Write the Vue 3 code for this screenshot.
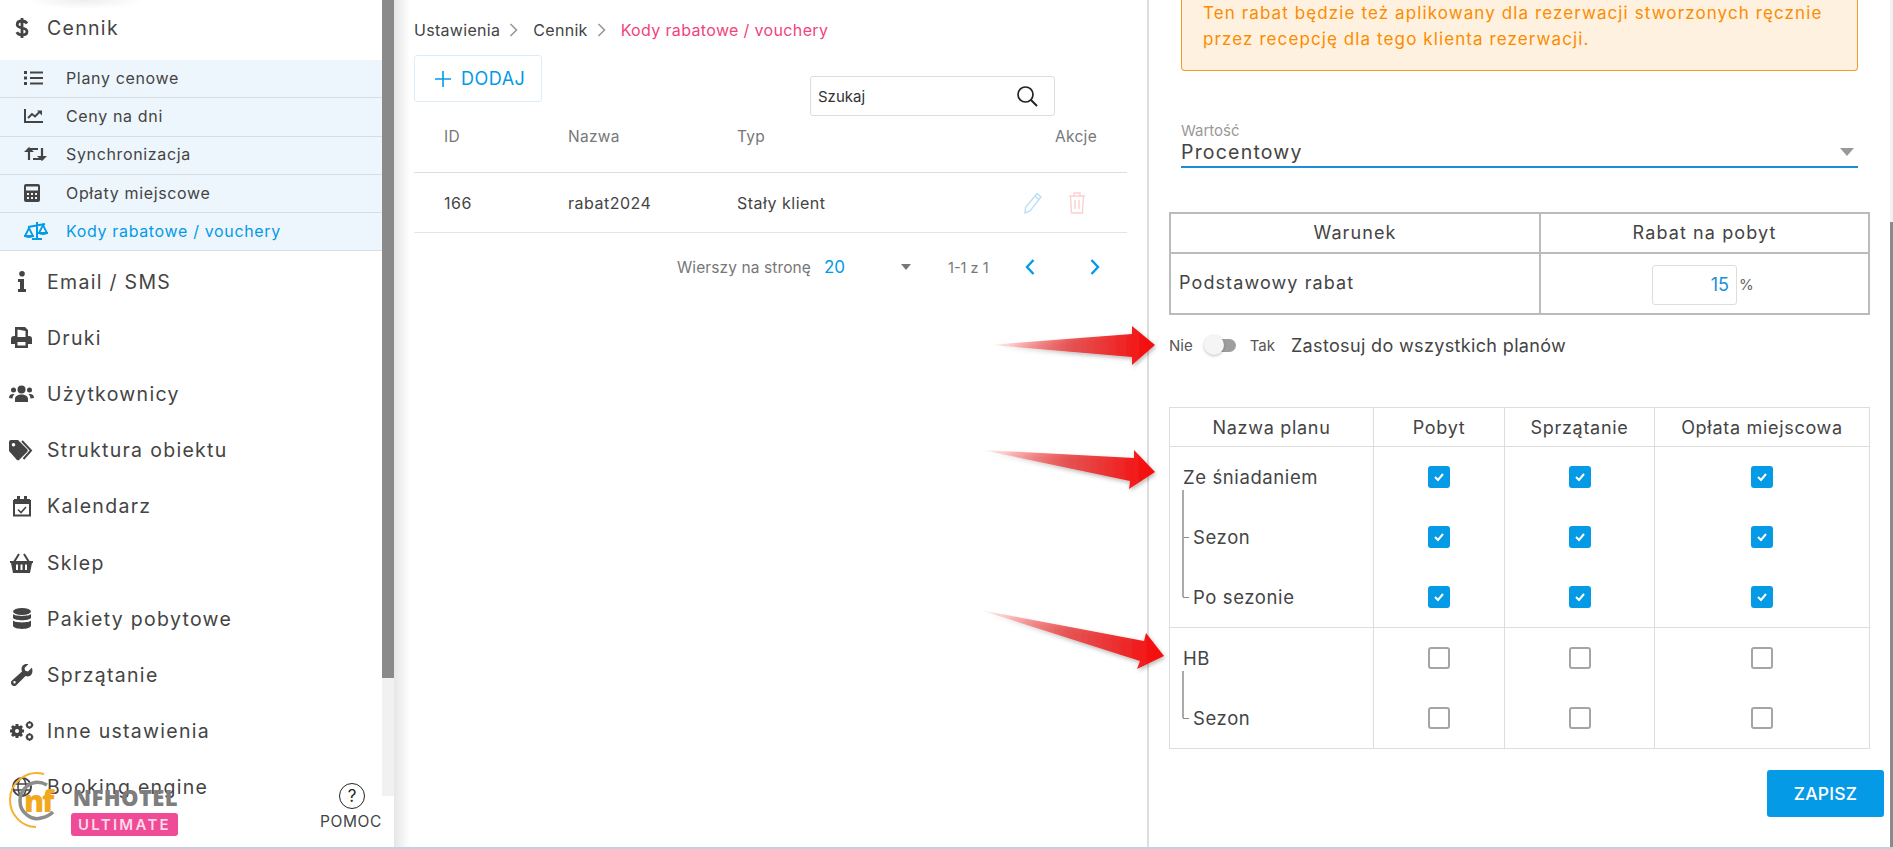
<template>
  <div class="page">
    <aside class="sidebar">
      <nav class="menu">
        <a class="item">
          <span class="ico"><svg width="14" height="22" viewBox="0 0 14 22"><path d="M7 1v20M12 6.500C11 4.800 9.300 4 7 4 4.200 4 2.200 5.400 2.200 7.500c0 5 9.800 2 9.800 7 0 2.200-2.100 3.500-5 3.500-2.500 0-4.300-1-5.200-2.800" fill="none" stroke="#444" stroke-width="2.800"/></svg></span>
          Cennik
        </a>
        <div class="submenu">
          <a v-for="s in subItems" :key="s.label" class="subitem" :class="{ active: s.active }">
            <span class="subico" v-html="s.icon"></span>
            {{ s.label }}
          </a>
        </div>
        <a v-for="m in menuItems" :key="m.label" class="item">
          <span class="ico" v-html="m.icon"></span>
          {{ m.label }}
        </a>
      </nav>
      <div class="scrollbar"><div class="thumb"></div></div>
      <div class="logo">
        <svg class="logo-mark" width="60" height="60" viewBox="0 0 60 60">
          <path d="M36 3C18 -2 2 12 2 29 2 44 14 56 28 56" fill="none" stroke="#f4b02e" stroke-width="2"/>
          <path d="M39 14C24 6 12 18 12 30c0 12 12 20 21 17 5-1 9-3 12-6" fill="none" stroke="#8c8c8c" stroke-width="3.500"/>
          <text x="16" y="41" class="logo-nf">nf</text>
        </svg>
        <div class="logo-text">
          <span class="logo-name">NFHOTEL</span>
          <span class="logo-badge">ULTIMATE</span>
        </div>
      </div>
      <div class="help">
        <span class="help-circle">?</span>
        <span class="help-label">POMOC</span>
      </div>
    </aside>

    <main class="main">
      <div class="crumbs">
        <span>Ustawienia</span>
        <svg class="crumb-sep" width="9" height="14" viewBox="0 0 9 14"><path d="M1.500 1l6 6-6 6" fill="none" stroke="#999" stroke-width="1.600"/></svg>
        <span>Cennik</span>
        <svg class="crumb-sep" width="9" height="14" viewBox="0 0 9 14"><path d="M1.500 1l6 6-6 6" fill="none" stroke="#999" stroke-width="1.600"/></svg>
        <span class="crumb-on">Kody rabatowe / vouchery</span>
      </div>

      <button class="add">
        <svg width="18" height="18" viewBox="0 0 18 18"><path d="M9 1v16M1 9h16" stroke="#049ae6" stroke-width="1.600"/></svg>
        DODAJ
      </button>

      <div class="search">
        <span>Szukaj</span>
        <svg width="24" height="24" viewBox="0 0 24 24"><circle cx="10.500" cy="10.500" r="7.500" fill="none" stroke="#222" stroke-width="1.700"/><path d="M16 16l6 6" stroke="#222" stroke-width="1.900"/></svg>
      </div>

      <div class="grid-row grid-head">
        <span>ID</span><span>Nazwa</span><span>Typ</span><span class="right">Akcje</span>
      </div>
      <div class="grid-row grid-body">
        <span>166</span><span>rabat2024</span><span>Stały klient</span>
        <span class="actions">
          <svg width="20" height="24" viewBox="0 0 20 24"><path d="M14 2.500l4 3.500L7 20l-5 2 .5-5.500z M12 5l4 3.500" fill="none" stroke="#bcdff5" stroke-width="1.400"/></svg>
          <svg width="20" height="24" viewBox="0 0 20 24"><path d="M2 5h16M7 5V2h6v3M3.500 5l1 17h11l1-17M8 9v9M12 9v9" fill="none" stroke="#fbd0d0" stroke-width="1.400"/></svg>
        </span>
      </div>

      <div class="pager">
        <span class="pager-label">Wierszy na stronę</span>
        <span class="pager-size">20</span>
        <span class="pager-caret"></span>
        <span class="pager-range">1-1 z 1</span>
        <svg class="pager-prev" width="12" height="18" viewBox="0 0 12 18"><path d="M9.500 2L3 9l6.500 7" fill="none" stroke="#049ae6" stroke-width="2.400"/></svg>
        <svg class="pager-next" width="12" height="18" viewBox="0 0 12 18"><path d="M2.500 2L9 9l-6.500 7" fill="none" stroke="#049ae6" stroke-width="2.400"/></svg>
      </div>
    </main>

    <section class="panel">
      <div class="notice-wrap">
        <div class="notice">
          Ten rabat będzie też aplikowany dla rezerwacji stworzonych ręcznie<br />
          przez recepcję dla tego klienta rezerwacji.
        </div>
      </div>

      <div class="select">
        <label>Wartość</label>
        <div class="select-value">Procentowy<span class="select-caret"></span></div>
      </div>

      <table class="discount">
        <tbody>
          <tr class="discount-head">
            <td class="c-name center">Warunek</td>
            <td class="center">Rabat na pobyt</td>
          </tr>
          <tr class="discount-row">
            <td>Podstawowy rabat</td>
            <td class="center">
              <span class="percent"><span class="percent-box">15</span><span class="percent-sign">%</span></span>
            </td>
          </tr>
        </tbody>
      </table>

      <div class="toggle-row">
        <span class="small">Nie</span>
        <span class="toggle"><span class="knob"></span></span>
        <span class="small">Tak</span>
        <span class="toggle-text">Zastosuj do wszystkich planów</span>
      </div>

      <div class="plans">
        <div class="plan-head">
          <div>Nazwa planu</div><div>Pobyt</div><div>Sprzątanie</div><div>Opłata miejscowa</div>
        </div>
        <div v-for="g in plans" :key="g.name" class="plan-group">
          <div class="plan-names">
            <div class="plan-name">{{ g.name }}</div>
            <div v-for="(c, i) in g.children" :key="c" class="plan-child">
              <span class="branch" :class="{ last: i === g.children.length - 1 }"></span>{{ c }}
            </div>
            <span class="trunk" :style="{ height: (g.children.length * 60 - 13) + 'px' }"></span>
          </div>
          <div v-for="n in 3" :key="n" class="plan-col">
            <span v-for="k in g.children.length + 1" :key="k" class="check" :class="{ on: g.on }">
              <svg v-if="g.on" width="12" height="10" viewBox="0 0 12 10"><path d="M2 5l3 3 5-6" fill="none" stroke="#fff" stroke-width="2"/></svg>
            </span>
          </div>
        </div>
      </div>

      <div class="save-row"><button class="save">ZAPISZ</button></div>
      <div class="panel-scroll"><div class="panel-thumb"></div></div>
    </section>

    <svg class="arrows" width="1893" height="849" viewBox="0 0 1893 849">
      <defs>
        <linearGradient id="red1" x1="0" x2="1" y1="0" y2="0">
          <stop offset="0" stop-color="#f11" stop-opacity="0" />
          <stop offset="0.5" stop-color="#e63c3c" stop-opacity="0.85" />
          <stop offset="1" stop-color="#f60808" />
        </linearGradient>
        <filter id="arrowShadow" x="-10%" y="-30%" width="120%" height="170%">
          <feDropShadow dx="1" dy="2" stdDeviation="2" flood-color="#000" flood-opacity="0.3" />
        </filter>
      </defs>
      <g fill="url(#red1)" filter="url(#arrowShadow)">
        <path d="M990 345L1132 334V326L1155 345L1132 365V357Z" />
        <path d="M982 450L1134 458V450L1155 472L1129 489L1130 481Z" />
        <path d="M980 610L1144 641L1146 633L1164 656L1137 669L1140 661Z" />
      </g>
    </svg>
    <div class="bottom-line"></div>
  </div>
</template>

<script setup>
const subItems = [
  {
    label: 'Plany cenowe',
    icon: '<svg width="19" height="16" viewBox="0 0 19 16"><path d="M0 1h3v3H0zM0 6.500h3v3H0zM0 12h3v3H0zM6 1.500h13v2H6zM6 7h13v2H6zM6 12.500h13v2H6z" fill="#444"/></svg>'
  },
  {
    label: 'Ceny na dni',
    icon: '<svg width="19" height="16" viewBox="0 0 19 16"><path d="M1 1v13h18" fill="none" stroke="#444" stroke-width="2"/><path d="M4 10l4-4 3 2.500 5-5" fill="none" stroke="#444" stroke-width="2"/><path d="M13 2.500h5v5z" fill="#444"/></svg>'
  },
  {
    label: 'Synchronizacja',
    icon: '<svg width="23" height="16" viewBox="0 0 23 16"><path d="M5 14V3h9M18 2v11H9" fill="none" stroke="#444" stroke-width="2.200"/><path d="M0 6l5-5 5 5zM13 10l5 5 5-5z" fill="#444"/></svg>'
  },
  {
    label: 'Opłaty miejscowe',
    icon: '<svg width="16" height="18" viewBox="0 0 16 18"><path fill-rule="evenodd" d="M2 0h12a2 2 0 012 2v14a2 2 0 01-2 2H2a2 2 0 01-2-2V2a2 2 0 012-2zM2 2.500v4h12v-4zM3 9v2h2V9zM7 9v2h2V9zM11 9v2h2V9zM3 13v2h2v-2zM7 13v2h2v-2zM11 13v2h2v-2z" fill="#444"/></svg>'
  },
  {
    label: 'Kody rabatowe / vouchery',
    active: true,
    icon: '<svg width="24" height="18" viewBox="0 0 24 18"><path d="M13 0v16M4 5l17-3" fill="none" stroke="#049ae6" stroke-width="2"/><path d="M1 14l4-8 4 8zM15 11l4-8 4 8z" fill="none" stroke="#049ae6" stroke-width="1.800"/><path d="M0 13h10c0 4-10 4-10 0zM14 10h10c0 4-10 4-10 0zM8 16h10v2H8z" fill="#049ae6"/></svg>'
  }
];

const menuItems = [
  {
    label: 'Email / SMS',
    icon: '<svg width="10" height="21" viewBox="0 0 10 21"><circle cx="5" cy="2.800" r="2.800" fill="#444"/><path d="M1 8h6v10h2v3H1v-3h2v-7H1z" fill="#444"/></svg>'
  },
  {
    label: 'Druki',
    icon: '<svg width="21" height="21" viewBox="0 0 21 21"><path fill-rule="evenodd" d="M4 0h10l3 3v6h1a3 3 0 013 3v5h-4v4H4v-4H0v-5a3 3 0 013-3h1zM6.500 2.500V10h8V4zM6.500 15v3.500h8V15z" fill="#444"/></svg>'
  },
  {
    label: 'Użytkownicy',
    icon: '<svg width="25" height="18" viewBox="0 0 25 18"><circle cx="12.500" cy="4.500" r="4" fill="#444"/><circle cx="4.500" cy="5" r="2.500" fill="#444"/><circle cx="20.500" cy="5" r="2.500" fill="#444"/><path d="M6 17v-3c0-3 3-4.500 6.500-4.500S19 11 19 14v3zM0 13c0-3 2-4.500 5.500-4-1.500 1.500-2 3-2 4.500zM25 13c0-3-2-4.500-5.500-4 1.500 1.500 2 3 2 4.500z" fill="#444"/></svg>'
  },
  {
    label: 'Struktura obiektu',
    icon: '<svg width="25" height="21" viewBox="0 0 25 21"><path fill-rule="evenodd" d="M2 0h7l9 9a2 2 0 010 3l-7.500 7.500a2 2 0 01-3 0L0 11V2a2 2 0 012-2zM4.500 3a1.800 1.800 0 100 3.600 1.800 1.800 0 000-3.600z" fill="#444"/><path d="M13 1l9 9.500L14.500 19" fill="none" stroke="#444" stroke-width="2"/></svg>'
  },
  {
    label: 'Kalendarz',
    icon: '<svg width="18" height="21" viewBox="0 0 18 21"><path d="M1 5h16v14.500H1z" fill="none" stroke="#444" stroke-width="2"/><path d="M1 3h16v5H1zM4 0h3v4H4zM11 0h3v4h-3z" fill="#444"/><path d="M5 13.500l3 3 5-5.500" fill="none" stroke="#444" stroke-width="1.600"/></svg>'
  },
  {
    label: 'Sklep',
    icon: '<svg width="23" height="20" viewBox="0 0 23 20"><path fill-rule="evenodd" d="M0 8h23v2h-1l-2 10H3L1 10H0zM6 11.500V17h2v-5.500zM10.500 11.500V17h2v-5.500zM15 11.500V17h2v-5.500z" fill="#444"/><path d="M4 9l5-8M19 9l-5-8" stroke="#444" stroke-width="2"/></svg>'
  },
  {
    label: 'Pakiety pobytowe',
    icon: '<svg width="18" height="21" viewBox="0 0 18 21"><ellipse cx="9" cy="3.500" rx="9" ry="3.500" fill="#444"/><path d="M0 6c2 2.500 16 2.500 18 0v4c-2 3-16 3-18 0zM0 12.500c2 2.500 16 2.500 18 0v5c0 4.500-18 4.500-18 0z" fill="#444"/></svg>'
  },
  {
    label: 'Sprzątanie',
    icon: '<svg width="22" height="22" viewBox="0 0 22 22"><path fill-rule="evenodd" d="M21 3.500l-4 4-2.800-.7-.7-2.800 4-4c-3.500-1-7 1.500-7 5 0 1 .2 1.700.5 2.400L1 16.500a3 3 0 004.500 4.500l9-9c.8.300 1.500.5 2.400.5 3.500 0 5.500-4 4.100-8.500zM3.500 19.500a1.200 1.200 0 110-2.400 1.200 1.200 0 010 2.400z" fill="#444"/></svg>'
  },
  {
    label: 'Inne ustawienia',
    icon: '<svg width="25" height="20" viewBox="0 0 25 20"><path d="M8 3v14M1 10h14M3 5l10 10M13 5L3 15" stroke="#444" stroke-width="3"/><circle cx="8" cy="10" r="4" fill="none" stroke="#444" stroke-width="3.200"/><circle cx="8" cy="10" r="2" fill="#fff"/><circle cx="20.500" cy="4" r="2.500" fill="none" stroke="#444" stroke-width="2.200"/><circle cx="20.500" cy="16" r="2.500" fill="none" stroke="#444" stroke-width="2.200"/><path d="M20.500 0v8M16.500 4h8M20.500 12v8M16.500 16h8" stroke="#444" stroke-width="1.200"/><circle cx="20.500" cy="4" r="1.400" fill="#fff"/><circle cx="20.500" cy="16" r="1.400" fill="#fff"/></svg>'
  },
  {
    label: 'Booking engine',
    icon: '<svg width="20" height="20" viewBox="0 0 20 20"><circle cx="10" cy="10" r="9" fill="none" stroke="#444" stroke-width="2"/><ellipse cx="10" cy="10" rx="4" ry="9" fill="none" stroke="#444" stroke-width="1.500"/><path d="M1 7h18M1 13h18" stroke="#444" stroke-width="1.500"/></svg>'
  }
];

const plans = [
  { name: 'Ze śniadaniem', children: ['Sezon', 'Po sezonie'], on: true },
  { name: 'HB', children: ['Sezon'], on: false }
];
</script>

<style>
html, body { margin: 0; background: #fff; }
</style>

<style scoped>
.page {
  position: relative;
  display: flex;
  width: 1893px;
  height: 849px;
  overflow: hidden;
  background: #fff;
  color: #444;
  font-family: "Inter", "Liberation Sans", sans-serif;
}

/* sidebar */
.sidebar {
  position: relative;
  flex: 0 0 394px;
  height: 849px;
  display: flex;
  overflow: hidden;
}
.menu {
  flex: 0 0 382px;
  display: flex;
  flex-direction: column;
  background: radial-gradient(ellipse 60px 9px at 85px 0, #eee, transparent);
}
.scrollbar { flex: 0 0 12px; height: 796px; background: #f1f1f1; }
.thumb { height: 678px; background: #8a8a8a; }
.item {
  height: 56.2px;
  flex: none;
  display: flex;
  align-items: center;
  padding-left: 47px;
  font-size: 19.500px;
  letter-spacing: 1.3px;
  position: relative;
  color: #444;
}
.item:first-child { height: 60px; padding-bottom: 4px; box-sizing: border-box; }
.ico {
  position: absolute;
  left: 9px;
  width: 25px;
  display: flex;
  justify-content: center;
}
.submenu { background: #eef6fd; flex: none; margin-bottom: 2px; }
.subitem {
  height: 38.3px;
  box-sizing: border-box;
  display: flex;
  align-items: center;
  padding-left: 66px;
  padding-bottom: 2px;
  font-size: 16px;
  letter-spacing: 0.65px;
  border-bottom: 1px solid #d8dde2;
  position: relative;
  color: #444;
}
.subitem.active { color: #049ae6; }
.subico { position: absolute; left: 24px; display: flex; }

.logo {
  position: absolute;
  left: 8px;
  top: 771px;
  display: flex;
}
.logo-mark { overflow: visible; }
.logo-nf { font: 800 30px "Open Sans", sans-serif; fill: #f2a81d; letter-spacing: -2px; }
.logo-text { display: flex; flex-direction: column; align-items: flex-end; margin-left: 3px; padding-top: 16px; }
.logo-name { font: 800 22px/20px "Open Sans", sans-serif; color: #7d7d7d; letter-spacing: 0.4px; }
.logo-badge {
  margin-top: 6px;
  width: 107px;
  height: 23px;
  line-height: 23px;
  background: #ef4b96;
  border-radius: 3px;
  color: #fbd9e8;
  font-size: 15px;
  font-weight: 600;
  letter-spacing: 2.3px;
  text-align: center;
}
.help {
  position: absolute;
  top: 796px;
  left: 310px;
  width: 84px;
  height: 53px;
  background: #fff;
}
.help-circle {
  position: absolute;
  top: -13px;
  left: 29px;
  width: 24px;
  height: 24px;
  border: 1.500px solid #222;
  border-radius: 50%;
  display: flex;
  align-items: center;
  justify-content: center;
  font-size: 17px;
  color: #222;
}
.help-label { position: absolute; top: 16px; left: 10px; font-size: 15.500px; letter-spacing: 0.6px; }

/* list */
.main {
  flex: 0 0 753px;
  box-sizing: border-box;
  padding: 0 20px;
  position: relative;
  background: linear-gradient(90deg, #e6e6e6, #fff 16px);
  font-size: 15px;
}
.crumbs {
  display: flex;
  align-items: center;
  height: 20px;
  margin-top: 20px;
  font-size: 16px;
  letter-spacing: 0.3px;
}
.crumb-sep { margin: 0 15px 0 9px; }
.crumb-on { color: #f1437d; letter-spacing: 0.35px; }
.add {
  display: flex;
  align-items: center;
  gap: 9px;
  margin-top: 15px;
  width: 128px;
  height: 47px;
  box-sizing: border-box;
  padding: 0 0 0 19px;
  background: #fff;
  border: 1px solid #dbeefa;
  border-radius: 3px;
  color: #049ae6;
  font: 400 18px "Inter", sans-serif;
  letter-spacing: 0.5px;
}
.search {
  position: absolute;
  left: 416px;
  top: 76px;
  width: 245px;
  height: 40px;
  box-sizing: border-box;
  border: 1px solid #ddd;
  border-radius: 3px;
  display: flex;
  align-items: center;
  justify-content: space-between;
  padding: 0 15px 0 7px;
  font-size: 15px;
  color: #333;
}
.grid-row {
  display: grid;
  grid-template-columns: 124px 169px 1fr 110px;
  padding-left: 30px;
  width: 713px;
  box-sizing: border-box;
  align-items: center;
}
.grid-head {
  height: 71px;
  align-items: start;
  padding-top: 25px;
  border-bottom: 1px solid #ddd;
  color: #777;
  padding-right: 30px;
  font-size: 15.500px;
  letter-spacing: 0.3px;
}
.grid-head .right { text-align: right; }
.grid-body {
  height: 60px;
  border-bottom: 1px solid #e4e4e4;
  padding-right: 30px;
  color: #444;
  font-size: 16px;
  letter-spacing: 0.5px;
}
.actions { display: flex; justify-content: flex-end; gap: 24px; padding-right: 10px; }
.pager {
  position: relative;
  height: 68px;
  width: 713px;
  display: flex;
  align-items: center;
  color: #777;
  font-size: 15.500px;
}
.pager-label { margin-left: 263px; width: 147px; white-space: nowrap; letter-spacing: 0.1px; }
.pager-size { color: #049ae6; font-size: 17px; width: 77px; }
.pager-caret { width: 0; height: 0; border: 5px solid transparent; border-top: 6px solid #777; border-bottom: 0; margin-right: 37px; }
.pager-range { width: 76px; font-size: 14.500px; }
.pager-prev { margin-right: 53px; }

/* panel */
.panel {
  position: relative;
  flex: 1;
  border-left: 2px solid #ddd;
  box-sizing: border-box;
  padding-left: 20px;
  font-size: 16px;
}
.notice-wrap { width: 689px; padding-left: 12px; box-sizing: border-box; overflow: hidden; }
.notice {
  box-sizing: border-box;
  width: 677px;
  height: 71px;
  padding-left: 21px;
  background: #fff1df;
  border: 1px solid #f39a2b;
  border-top: 0;
  border-radius: 0 0 4px 4px;
  color: #fb8c00;
  font-size: 17px;
  letter-spacing: 1.1px;
  line-height: 26px;
  white-space: nowrap;
}
.select { margin: 51px 0 0 12px; width: 677px; position: relative; }
.select label { display: block; font-size: 15px; color: #999; line-height: 17px; }
.select-value {
  height: 27px;
  line-height: 26px;
  border-bottom: 2px solid #1a8fd8;
  font-size: 19.500px;
  color: #444;
  position: relative;
  letter-spacing: 1.2px;
}
.select-caret {
  position: absolute;
  right: 4px;
  top: 9px;
  border: 7px solid transparent;
  border-top: 8px solid #999;
  border-bottom: 0;
}
.discount {
  margin-top: 44px;
  width: 701px;
  height: 103px;
  border-collapse: collapse;
  border: 2px solid #bbb;
  font-size: 18px;
  letter-spacing: 1.1px;
}
.discount td { border: 2px solid #bbb; padding: 0 0 2px 8px; }
.discount .center { text-align: center; padding: 0 0 2px; }
.c-name { width: 368px; }
.discount-head { height: 40px; }
.percent { display: inline-flex; align-items: center; margin-top: 4px; letter-spacing: 0; }
.percent-box {
  box-sizing: border-box;
  width: 85px;
  height: 40px;
  line-height: 38px;
  padding-right: 7px;
  border: 1px solid #ddd;
  border-radius: 3px;
  text-align: right;
  color: #1a8fd8;
  font-size: 18px;
}
.percent-sign { width: 18px; margin-left: 2px; text-align: left; font-size: 15px; color: #666; }
.toggle-row {
  display: flex;
  align-items: center;
  height: 32px;
  margin-top: 14px;
}
.small { font-size: 15px; color: #555; }
.toggle {
  position: relative;
  width: 23px;
  height: 13px;
  border-radius: 7px;
  background: #9e9e9e;
  margin: 0 14px 0 20px;
}
.knob {
  position: absolute;
  left: -9px;
  top: -4px;
  width: 20px;
  height: 20px;
  border-radius: 50%;
  background: #f5f5f5;
  box-shadow: 0 1px 3px rgba(0, 0, 0, 0.25);
}
.toggle-text { margin-left: 16px; font-size: 18px; letter-spacing: 0.35px; color: #444; white-space: nowrap; }

.plans {
  margin-top: 46px;
  width: 701px;
  box-sizing: border-box;
  border: 1px solid #ddd;
  border-width: 1px 1px 0 1px;
}
.plan-head, .plan-group {
  display: grid;
  grid-template-columns: 203px 131px 150px 1fr;
  border-bottom: 1px solid #ddd;
}
.plan-head { height: 38px; font-size: 18px; letter-spacing: 0.7px; }
.plan-head > div { display: flex; align-items: center; justify-content: center; white-space: nowrap; }
.plan-head > div + div { border-left: 1px solid #ddd; }
.plan-names { position: relative; font-size: 18.500px; letter-spacing: 0.6px; }
.plan-name, .plan-child { height: 60px; display: flex; align-items: center; position: relative; }
.plan-name { padding-left: 13px; }
.plan-child { padding-left: 23px; }
.trunk { position: absolute; left: 12px; top: 43px; width: 1.500px; background: #aaa; }
.branch { position: absolute; left: 13px; top: 30px; width: 6px; height: 1px; background: #888; }
.plan-col {
  border-left: 1px solid #ddd;
  display: flex;
  flex-direction: column;
  align-items: center;
}
.plan-col .check { margin: 19px 0; }
.check {
  box-sizing: border-box;
  width: 22px;
  height: 22px;
  border: 2px solid #a5a5a5;
  border-radius: 3px;
  display: flex;
  align-items: center;
  justify-content: center;
}
.check.on { background: #049ae6; border-color: #049ae6; }
.save-row { display: flex; justify-content: flex-end; margin-top: 21px; width: 715px; }
.save {
  width: 117px;
  height: 47px;
  border: 0;
  border-radius: 3px;
  background: #049ae6;
  color: #fff;
  font: 500 17.500px "Inter", sans-serif;
  letter-spacing: 0.2px;
}
.panel-scroll { position: absolute; right: 0; top: 0; bottom: 0; width: 3px; background: #f1f1f1; }
.panel-thumb { margin-top: 222px; height: 627px; background: #8a8a8a; }

.arrows { position: absolute; left: 0; top: 0; pointer-events: none; }
.bottom-line { position: absolute; left: 0; right: 0; bottom: 0; height: 2px; background: #c3cfe2; }
</style>
